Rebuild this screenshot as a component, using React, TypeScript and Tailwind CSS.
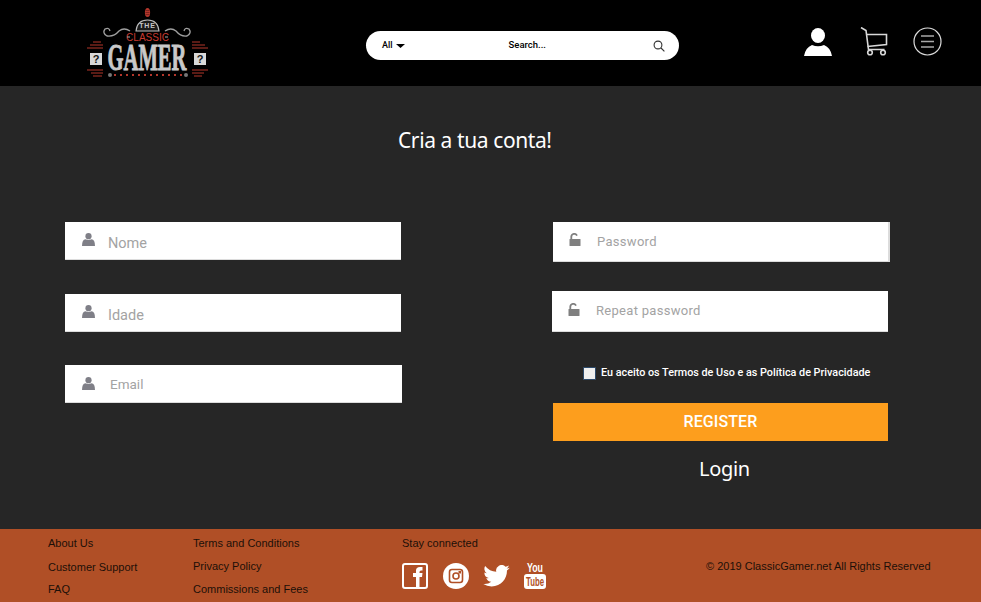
import React from "react";

function Logo() {
  return (
    <svg width="130" height="86" viewBox="0 0 130 86" className="block">
      {/* top gem */}
      <ellipse cx="66.500" cy="12.500" rx="2.600" ry="4.600" fill="#b3362b" />
      <path d="M64.500 10.500h4M64.500 12.500h4M64.500 14.500h4" stroke="#401010" strokeWidth="0.500" />
      {/* THE badge */}
      <path d="M55 31 Q56 20 66.500 20 Q77 20 78 31 Z" fill="#1a1a1a" stroke="#bdbdbd" strokeWidth="1.100" />
      <text x="66.500" y="28" textAnchor="middle" fontSize="7" fontWeight="700" fill="#c8c8c8" fontFamily="'Liberation Sans', sans-serif" letterSpacing="0.800">THE</text>
      {/* swirls */}
      <path d="M49 31 Q43 27 38 31 Q33 37 26 36 Q21 33 24 29 Q28 27 29 31" fill="none" stroke="#a0a0a0" strokeWidth="1.300" />
      <path d="M84 31 Q90 27 95 31 Q100 37 106 36 Q111 33 108 29 Q104 27 103 31" fill="none" stroke="#a0a0a0" strokeWidth="1.300" />
      <text x="66.500" y="40.500" textAnchor="middle" fontSize="10" fill="#c8392e" fontFamily="'Liberation Sans', sans-serif">CLASSIC</text>
      <path d="M46 37h3M84 37h3" stroke="#aaa" strokeWidth="1" />
      <text x="66" y="70" textAnchor="middle" fontSize="37" fontWeight="700" fill="#c9c9c9" stroke="#c9c9c9" strokeWidth="0.900" fontFamily="'Liberation Serif', serif" textLength="79" lengthAdjust="spacingAndGlyphs">GAMER</text>
      {/* side lines */}
      <path d="M12 42h8M9 45h13M6 48h16" stroke="#b3362b" strokeWidth="1" />
      <path d="M111 42h8M111 45h13M111 48h16" stroke="#b3362b" strokeWidth="1" />
      <path d="M6 70h16M10 73h12M12 76h9" stroke="#b3362b" strokeWidth="1" />
      <path d="M111 70h16M111 73h12M113 76h8" stroke="#b3362b" strokeWidth="1" />
      {/* question boxes */}
      <rect x="9" y="53" width="12" height="12" fill="#d8d8d8" />
      <rect x="113" y="53" width="12" height="12" fill="#d8d8d8" />
      <text x="15" y="63" textAnchor="middle" fontSize="11" fontWeight="700" fill="#111" fontFamily="'Liberation Sans', sans-serif">?</text>
      <text x="119" y="63" textAnchor="middle" fontSize="11" fontWeight="700" fill="#111" fontFamily="'Liberation Sans', sans-serif">?</text>
      {/* dots row */}
      <path d="M33 75h68" stroke="#b3362b" strokeWidth="2" strokeDasharray="2 4" />
      <circle cx="29" cy="75" r="2" fill="#777" />
      <circle cx="105" cy="75" r="2" fill="#777" />
    </svg>
  );
}

function PersonSmall() {
  return (
    <svg width="13" height="13" viewBox="0 0 13 13" fill="#7f7f87">
      <circle cx="6.500" cy="3.200" r="3.100" />
      <path d="M0 13 Q0 6.500 3.500 6.200 Q6.500 7.800 9.500 6.200 Q13 6.500 13 13 Z" />
    </svg>
  );
}

function LockOpen() {
  return (
    <svg width="12" height="13" viewBox="0 0 12 13" fill="#7f7f7f">
      <rect x="0.500" y="6" width="11" height="7" rx="0.500" />
      <path d="M2.300 6V3.600A3 3 0 0 1 8 2.600" fill="none" stroke="#7f7f7f" strokeWidth="1.800" />
    </svg>
  );
}

function Field({ icon, label, className, iconClass, textClass }: { icon: React.ReactNode; label: string; className: string; iconClass: string; textClass: string }) {
  return (
    <div className={`flex bg-white border-b border-[#dcdcdc] ${className}`}>
      <span className={`flex ${iconClass}`}>{icon}</span>
      <span className={`font-['Roboto',sans-serif] text-[#a3a3a3] ${textClass}`}>{label}</span>
    </div>
  );
}

function FooterLink({ children, className = "" }: { children: React.ReactNode; className?: string }) {
  return <a className={`block leading-[13px] text-[#1c0f08] ${className}`}>{children}</a>;
}

export default function App() {
  return (
    <div className="w-[981px] h-[602px] overflow-hidden flex flex-col bg-[#262626] font-['Liberation_Sans',sans-serif]">
      <header className="h-[86px] shrink-0 bg-black flex items-start">
        <div className="ml-[81px] w-[130px] h-[86px]">
          <Logo />
        </div>
        <div className="ml-[155px] mt-[31px] w-[313px] h-[29px] bg-white rounded-full flex items-center text-black text-[9.5px] font-['Roboto',sans-serif]">
          <span className="ml-[16px] font-medium text-[9px]">All</span>
          <svg width="9" height="4" viewBox="0 0 9 4" className="ml-[3px]"><path d="M0 0h9L4.500 4z" fill="#000" /></svg>
          <span className="ml-[104px] font-medium text-[9.5px]">Search...</span>
          <svg width="12" height="12" viewBox="0 0 12 12" fill="none" stroke="#333" strokeWidth="1.100" className="ml-[107px]">
            <circle cx="5" cy="5" r="3.900" />
            <path d="M8 8l3.400 3.400" />
          </svg>
        </div>
        <div className="ml-[125px] mt-[28px] flex items-start">
          <svg width="28" height="28" viewBox="0 0 28 28" fill="#fff">
            <ellipse cx="14" cy="7.500" rx="7" ry="7.500" />
            <path d="M0 28 Q1.500 19.500 8 17 Q14 19.500 20 17 Q26.500 19.500 28 28 Z" />
          </svg>
          <svg width="28" height="29" viewBox="0 0 28 29" fill="none" stroke="#d8d8d8" strokeWidth="1.600" className="ml-[28px] -mt-[1px]">
            <path d="M1 0.500l5 3 2.500 19h16" />
            <path d="M6 7.500h20.500v10l-19 2" />
            <circle cx="10" cy="25.500" r="2.300" />
            <circle cx="23" cy="25.500" r="2.300" />
          </svg>
          <svg width="29" height="29" viewBox="0 0 29 29" fill="none" className="ml-[25px] -mt-[1px]">
            <circle cx="14.500" cy="14.500" r="13.500" stroke="#dcdcdc" strokeWidth="1.200" />
            <path d="M8 9h13M8 14.500h13M8 20h13" stroke="#a8a8a8" strokeWidth="1.400" />
          </svg>
        </div>
      </header>

      <main className="flex-1">
        <h1 className="mt-[39px] ml-[398px] text-[21px] leading-[30px] text-white font-['Noto_Sans',sans-serif] tracking-[-0.4px]">Cria a tua conta!</h1>
        <div className="flex mt-[67px]">
          <div className="ml-[65px] w-[337px]">
            <Field
              icon={<PersonSmall />}
              label="Nome"
              className="w-[336px] h-[38px] mb-[34px]"
              iconClass="ml-[17px] mt-[11px]"
              textClass="ml-[13px] mt-[12px] text-[14.5px] leading-[20px]"
            />
            <Field
              icon={<PersonSmall />}
              label="Idade"
              className="w-[336px] h-[38px] mb-[33px]"
              iconClass="ml-[17px] mt-[11px]"
              textClass="ml-[13px] mt-[12px] text-[14.5px] leading-[20px]"
            />
            <Field
              icon={<PersonSmall />}
              label="Email"
              className="w-[337px] h-[38px]"
              iconClass="ml-[17px] mt-[12px]"
              textClass="ml-[15px] mt-[10px] text-[13.5px] leading-[18px]"
            />
          </div>
          <div className="ml-[150px] w-[338px]">
            <Field
              icon={<LockOpen />}
              label="Password"
              className="ml-[1px] w-[337px] h-[40px] mb-[29px] border-r-2"
              iconClass="ml-[16px] mt-[11px]"
              textClass="ml-[16px] mt-[11px] text-[13px] leading-[18px] tracking-[0.3px]"
            />
            <Field
              icon={<LockOpen />}
              label="Repeat password"
              className="w-[336px] h-[41px]"
              iconClass="ml-[16px] mt-[12px]"
              textClass="ml-[16px] mt-[11px] text-[13px] leading-[18px] tracking-[0.3px]"
            />
            <label className="flex items-center ml-[31px] mt-[34px] h-[14px]">
              <span className="w-[13px] h-[13px] bg-[#efefef] border border-[#2c4a6b] rounded-[1px]" />
              <span className="ml-[5px] text-white text-[10.8px] font-medium font-['Roboto',sans-serif] whitespace-nowrap">Eu aceito os Termos de Uso e as Política de Privacidade</span>
            </label>
            <button className="block ml-[1px] mt-[23px] w-[335px] h-[38px] bg-[#fd9e1d] text-white text-[16px] tracking-[0.1px] font-medium font-['Roboto',sans-serif]">REGISTER</button>
            <div className="ml-[147px] mt-[13px] text-white text-[20px] leading-[30px] font-['Noto_Sans',sans-serif] tracking-[-0.3px]">Login</div>
          </div>
        </div>
      </main>

      <footer className="h-[73px] shrink-0 bg-[#b04f26] flex text-[11px] text-[#1c0f08] overflow-hidden">
        <div className="ml-[48px] w-[145px] pt-[8px]">
          <FooterLink>About Us</FooterLink>
          <FooterLink className="mt-[11px]">Customer Support</FooterLink>
          <FooterLink className="mt-[9px]">FAQ</FooterLink>
        </div>
        <div className="w-[209px] pt-[8px]">
          <FooterLink>Terms and Conditions</FooterLink>
          <FooterLink className="mt-[10px]">Privacy Policy</FooterLink>
          <FooterLink className="mt-[10px]">Commissions and Fees</FooterLink>
        </div>
        <div className="w-[304px] pt-[8px]">
          <FooterLink>Stay connected</FooterLink>
          <div className="flex items-center mt-[11px]">
            <svg width="26" height="26" viewBox="0 0 26 26" fill="none">
              <rect x="1" y="1" width="24" height="24" rx="2" stroke="#fff" strokeWidth="2" />
              <path d="M14 25V14h-3v-4h3V7.500Q14 4 18 4h2.500v3.500H19q-1.500 0-1.500 1.500v1h3l-.5 4h-2.500v11z" fill="#fff" />
            </svg>
            <svg width="26" height="26" viewBox="0 0 26 26" className="ml-[15px]">
              <circle cx="13" cy="13" r="13" fill="#fff" />
              <rect x="6.500" y="6.500" width="13" height="13" rx="2.500" fill="none" stroke="#b04f26" strokeWidth="1.600" />
              <circle cx="13" cy="13" r="3" fill="none" stroke="#b04f26" strokeWidth="1.600" />
              <rect x="15.500" y="8" width="2.500" height="2.500" fill="#b04f26" />
            </svg>
            <svg width="27" height="22" viewBox="0 0 24 20" fill="#fff" className="ml-[14px]">
              <path d="M24 2.400a9.800 9.800 0 0 1-2.800.8A4.900 4.900 0 0 0 23.300.500a9.800 9.800 0 0 1-3.100 1.200 4.900 4.900 0 0 0-8.400 4.500A14 14 0 0 1 1.700.900a4.900 4.900 0 0 0 1.500 6.600 4.900 4.900 0 0 1-2.200-.6 4.900 4.900 0 0 0 3.900 4.900 4.900 4.900 0 0 1-2.200.1 4.900 4.900 0 0 0 4.600 3.400A9.900 9.900 0 0 1 0 17.300 14 14 0 0 0 7.500 19.500c9.100 0 14.300-7.700 14-14.600A10 10 0 0 0 24 2.400z" />
            </svg>
            <svg width="24" height="29" viewBox="0 0 24 29" className="ml-[13px]">
              <text x="12" y="11" textAnchor="middle" fontSize="12.500" fontWeight="700" fill="#fff" fontFamily="'Liberation Sans', sans-serif" textLength="16" lengthAdjust="spacingAndGlyphs">You</text>
              <rect x="1" y="13" width="22" height="15" rx="3" fill="#fff" />
              <text x="12" y="25" textAnchor="middle" fontSize="12" fontWeight="700" fill="#b04f26" fontFamily="'Liberation Sans', sans-serif" textLength="18" lengthAdjust="spacingAndGlyphs">Tube</text>
            </svg>
          </div>
        </div>
        <div className="pt-[31px] leading-[13px] whitespace-nowrap">© 2019 ClassicGamer.net All Rights Reserved</div>
      </footer>
    </div>
  );
}
